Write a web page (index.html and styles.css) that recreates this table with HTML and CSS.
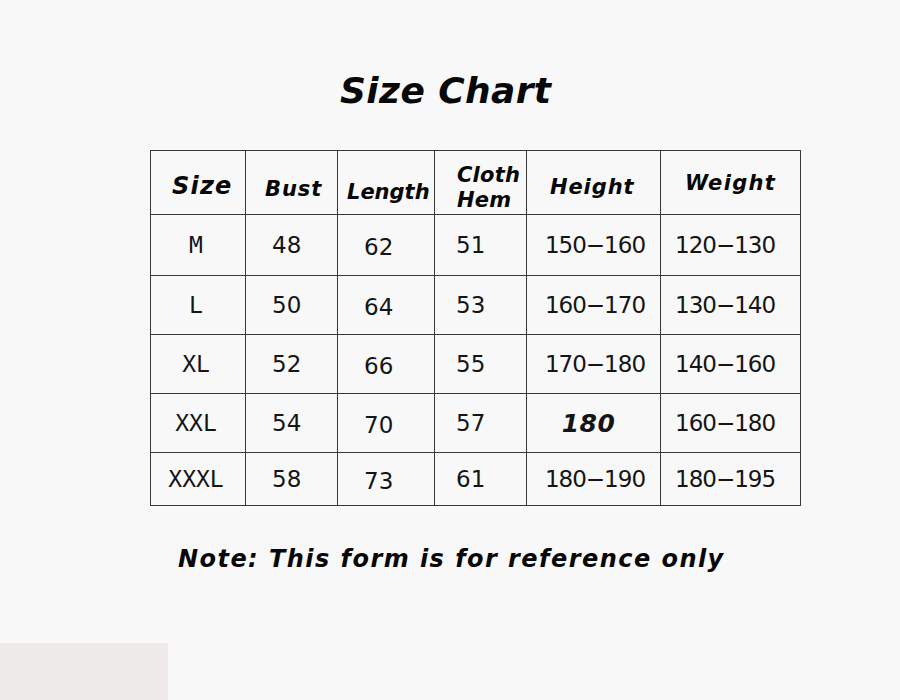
FILE: index.html
```html
<!DOCTYPE html>
<html lang="en">
<head>
<meta charset="utf-8">
<title>Size Chart</title>
<link rel="stylesheet" href="styles.css">
</head>
<body>
<main class="page">
  <h1 class="title">Size Chart</h1>
  <table class="chart">
    <colgroup>
      <col class="c-size"><col class="c-bust"><col class="c-length"><col class="c-hem"><col class="c-height"><col class="c-weight">
    </colgroup>
    <thead>
      <tr class="head-row">
        <th class="h-size">Size</th>
        <th class="h-bust">Bust</th>
        <th class="h-length">Length</th>
        <th class="h-hem">Cloth<br>Hem</th>
        <th class="h-height">Height</th>
        <th class="h-weight">Weight</th>
      </tr>
    </thead>
    <tbody>
      <tr class="row-1">
        <td class="d-size">M</td><td class="d-bust">48</td><td class="d-length">62</td><td class="d-hem">51</td><td class="d-height d-range">150−160</td><td class="d-weight d-range">120−130</td>
      </tr>
      <tr class="row-2">
        <td class="d-size">L</td><td class="d-bust">50</td><td class="d-length">64</td><td class="d-hem">53</td><td class="d-height d-range">160−170</td><td class="d-weight d-range">130−140</td>
      </tr>
      <tr class="row-3">
        <td class="d-size">XL</td><td class="d-bust">52</td><td class="d-length">66</td><td class="d-hem">55</td><td class="d-height d-range">170−180</td><td class="d-weight d-range">140−160</td>
      </tr>
      <tr class="row-4">
        <td class="d-size">XXL</td><td class="d-bust">54</td><td class="d-length">70</td><td class="d-hem">57</td><td class="d-height d-strong">180</td><td class="d-weight d-range">160−180</td>
      </tr>
      <tr class="row-5">
        <td class="d-size">XXXL</td><td class="d-bust">58</td><td class="d-length">73</td><td class="d-hem">61</td><td class="d-height d-range">180−190</td><td class="d-weight d-range">180−195</td>
      </tr>
    </tbody>
  </table>
  <p class="note">Note: This form is for reference only</p>
</main>
<div class="corner"></div>
</body>
</html>
```

FILE: styles.css
```css
* { box-sizing: border-box; }
html, body { margin: 0; padding: 0; }
body {
  width: 900px;
  height: 700px;
  overflow: hidden;
  background: #f8f8f8;
  display: flex;
  flex-direction: column;
  font-family: "DejaVu Sans", "Noto Sans", sans-serif;
  color: #111;
}
.page { padding-top: 70px; }
.title {
  margin: 0 0 0 340px;
  font-size: 36px;
  line-height: 42px;
  font-weight: bold;
  font-style: italic;
  letter-spacing: 0.4px;
  color: #080808;
}
.chart {
  margin: 38px 0 0 150px;
  border-collapse: collapse;
  table-layout: fixed;
  width: 651px;
}
.c-size { width: 95px; }
.c-bust { width: 92px; }
.c-length { width: 97px; }
.c-hem { width: 92px; }
.c-height { width: 134px; }
.c-weight { width: 140px; }

.chart th, .chart td {
  border: 1px solid #383838;
  padding: 0;
}
.chart th {
  font-size: 21px;
  line-height: 25px;
  font-weight: bold;
  font-style: italic;
  letter-spacing: 0.9px;
  text-align: left;
  vertical-align: top;
  color: #080808;
}
.head-row { height: 64px; }
.row-1 { height: 61px; }
.row-2, .row-3, .row-4 { height: 59px; }
.row-5 { height: 53px; }

.h-size { font-size: 24px !important; line-height: 28px !important; padding: 21px 0 0 21px !important; letter-spacing: 1.2px !important; }
.h-bust { padding: 26px 0 0 19px !important; }
.h-length { padding: 29px 0 0 9px !important; letter-spacing: 0 !important; }
.h-hem { padding: 12px 0 0 22px !important; letter-spacing: 0.2px !important; }
.h-height { padding: 24px 0 0 23px !important; }
.h-weight { padding: 20px 0 0 24px !important; letter-spacing: 1.3px !important; }

.chart td {
  font-size: 23px;
  line-height: 27px;
  vertical-align: middle;
  color: #151515;
  text-align: left;
}
.d-size {
  font-family: "DejaVu Sans Mono", monospace;
  text-align: center !important;
  padding-right: 4px !important;
}
.d-bust { padding-left: 26px !important; }
.d-length { padding-left: 26px !important; padding-top: 4px !important; }
.d-hem { padding-left: 21px !important; }
.d-height { text-align: center !important; }
.d-weight { padding-left: 14px !important; }
.d-range { letter-spacing: -1px; }
.d-height.d-range { padding-left: 3px !important; }
.d-strong {
  font-weight: bold;
  font-style: italic;
  font-size: 25px !important;
  letter-spacing: 0.5px;
  padding-right: 10px !important;
}
.note {
  margin: 39px 0 0 178px;
  font-size: 24px;
  line-height: 28px;
  font-weight: bold;
  font-style: italic;
  letter-spacing: 1.45px;
  color: #080808;
}
.corner {
  margin-top: auto;
  width: 168px;
  height: 57px;
  background: #efeaea;
}
```
